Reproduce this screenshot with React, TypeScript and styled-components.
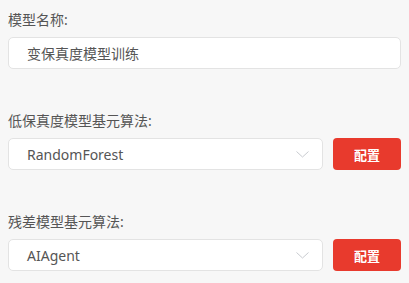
import { createGlobalStyle, styled } from 'styled-components';

const GlobalStyle = createGlobalStyle`
  html, body {
    margin: 0;
    padding: 0;
    background: #f7f7f7;
  }
  body {
    font-family: "Noto Sans", "Noto Sans CJK SC", sans-serif;
  }
`;

const fields = [
  { label: '低保真度模型基元算法:', value: 'RandomForest' },
  { label: '残差模型基元算法:', value: 'AIAgent' },
];

export default function App() {
  return (
    <>
      <GlobalStyle />
      <Form>
        <Field>
          <Label>模型名称:</Label>
          <TextInput>变保真度模型训练</TextInput>
        </Field>

        {fields.map((f) => (
          <Field key={f.label}>
            <Label>{f.label}</Label>
            <Row>
              <Select>
                <span>{f.value}</span>
                <svg width='13' height='7' viewBox='0 0 13 7' fill='none'>
                  <path d='M0.5 0.5L6.5 6L12.5 0.5' stroke='#c8cbd0' strokeWidth='1' />
                </svg>
              </Select>
              <ConfigButton>配置</ConfigButton>
            </Row>
          </Field>
        ))}
      </Form>
    </>
  );
}

const Form = styled.div`
  display: flex;
  flex-direction: column;
  gap: 41px;
  padding: 9px 8px 0;
`;

const Field = styled.div`
  display: flex;
  flex-direction: column;
  gap: 6px;
`;

const Label = styled.div`
  font-size: 14px;
  line-height: 22px;
  color: #555;
`;

const TextInput = styled.div`
  box-sizing: border-box;
  height: 32px;
  display: flex;
  align-items: center;
  padding: 0 18px;
  background: #fff;
  border: 1px solid #e3e3e3;
  border-radius: 5px;
  font-size: 14px;
  color: #555;
`;

const Row = styled.div`
  display: flex;
  gap: 10px;
`;

const Select = styled(TextInput)`
  flex: 1;
  justify-content: space-between;
  padding-right: 13px;
`;

const ConfigButton = styled.button`
  width: 68px;
  height: 32px;
  border: none;
  border-radius: 4px;
  background: #e83a2d;
  color: #fff;
  font-family: "Noto Sans CJK SC", sans-serif;
  font-size: 13px;
  font-weight: 700;
  cursor: pointer;
`;
